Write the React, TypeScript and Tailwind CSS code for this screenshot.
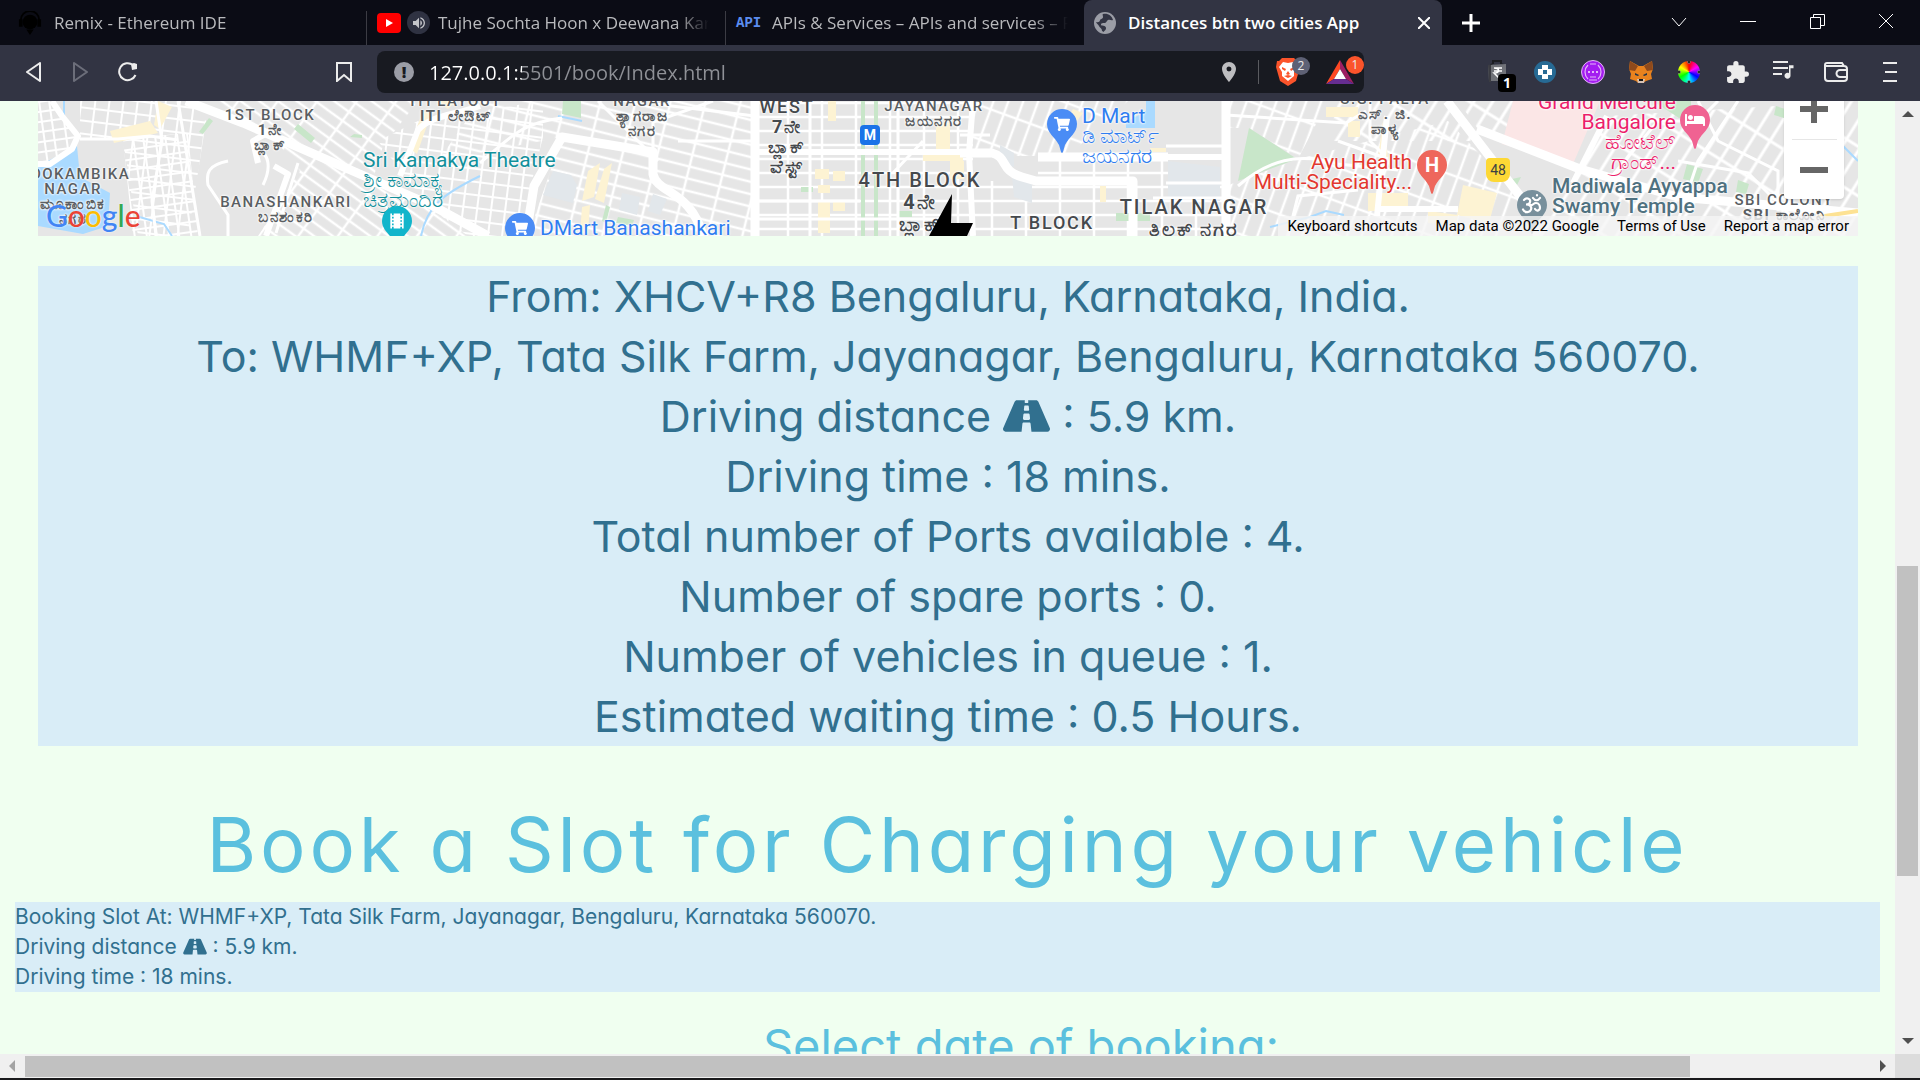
import React from "react";
import { FaRoad, FaShoppingCart, FaBed } from "react-icons/fa";
import { MdExtension, MdLocationOn, MdMusicNote, MdTheaters, MdVolumeUp } from "react-icons/md";

interface MapLabelProps {
  lines: string[];
  x: number;
  y: number;
  className: string;
}

interface TabProps {
  title: string;
  icon: React.ReactNode;
  active?: boolean;
}

const area = "text-[15px] leading-[15px] font-medium tracking-widest text-[#5a5e62] text-center -translate-x-1/2";
const district = "text-[18px] leading-[20px] font-medium tracking-widest text-[#45494d] text-center -translate-x-1/2";
const ward = "text-[20px] leading-[22px] font-medium tracking-widest text-[#45494d] text-center -translate-x-1/2";
const place = "text-[21px] leading-[20px]";

const labels: MapLabelProps[] = [
  { lines: ["1ST BLOCK", "1ನೇ", "ಬ್ಲಾಕ್"], x: 232, y: 7, className: area },
  { lines: ["MOOKAMBIKA", "NAGAR", "ಮೂಕಾಂಬಿಕ", "ನಗರ"], x: 35, y: 66, className: area },
  { lines: ["BANASHANKARI", "ಬನಶಂಕರಿ"], x: 248, y: 94, className: area },
  { lines: ["ITI LAYOUT", "ITI ಲೇಔಟ್"], x: 418, y: -7, className: area },
  { lines: ["NAGAR", "ತ್ಯಾಗರಾಜ", "ನಗರ"], x: 604, y: -7, className: area },
  { lines: ["JAYANAGAR", "ಜಯನಗರ"], x: 896, y: -2, className: area },
  { lines: ["S.G. PALYA", "ಎಸ್. ಜಿ.", "ಪಾಳ್ಯ"], x: 1347, y: -9, className: area },
  { lines: ["SBI COLONY", "SBI ಕಾಲೋನಿ"], x: 1746, y: 92, className: area },
  { lines: ["WEST", "7ನೇ", "ಬ್ಲಾಕ್", "ವೆಸ್ಟ್"], x: 749, y: -4, className: district },
  { lines: ["4TH BLOCK", "4ನೇ", "ಬ್ಲಾಕ್"], x: 882, y: 68, className: ward },
  { lines: ["T BLOCK"], x: 1014, y: 112, className: district },
  { lines: ["TILAK NAGAR", "ತಿಲಕ್ ನಗರ"], x: 1156, y: 95, className: ward },
  { lines: ["Sri Kamakya Theatre", "ಶ್ರೀ ಕಾಮಾಕ್ಯ", "ಚಿತ್ರಮಂದಿರ"], x: 325, y: 49, className: `${place} text-[#12909b]` },
  { lines: ["DMart Banashankari"], x: 502, y: 117, className: `${place} text-[#2f7df0]` },
  { lines: ["D Mart", "ಡಿ ಮಾರ್ಟ್", "ಜಯನಗರ"], x: 1044, y: 5, className: `${place} text-[#2f7df0]` },
  { lines: ["Ayu Health", "Multi-Speciality..."], x: 1374, y: 51, className: `${place} text-right -translate-x-full text-[#e2382f]` },
  { lines: ["Grand Mercure", "Bangalore", "ಹೋಟೆಲ್", "ಗ್ರಾಂಡ್..."], x: 1638, y: -9, className: `${place} text-right -translate-x-full text-[#ec1f6c]` },
  { lines: ["Madiwala Ayyappa", "Swamy Temple"], x: 1514, y: 75, className: `${place} font-medium text-[#4f7180]` },
];

const isKannada = (line: string) => /[\u0c80-\u0cff]/.test(line);

const MapLabel: React.FC<MapLabelProps> = ({ lines, x, y, className }) => (
  <p
    className={`absolute whitespace-nowrap [text-shadow:0_0_2px_#fff,0_0_2px_#fff,0_0_3px_#fff] ${className}`}
    style={{ left: x, top: y }}
  >
    {lines.map((line) => (
      <span key={line} className={isKannada(line) && className.includes("tracking-widest") ? "block font-bold" : "block"}>
        {line}
      </span>
    ))}
  </p>
);

const Pin: React.FC<{ x: number; y: number; color: string; children: React.ReactNode }> = ({ x, y, color, children }) => (
  <div className="absolute h-[46px] w-[30px] -translate-x-1/2" style={{ left: x, top: y - 15 }}>
    <svg viewBox="0 0 30 46" className="absolute inset-0" fill={color}>
      <path d="M15 0a15 15 0 0 1 15 15c0 9-8 13-12 21-1 3-2 8-3 8s-2-5-3-8C8 28 0 24 0 15A15 15 0 0 1 15 0z" />
    </svg>
    <span className="relative flex h-[30px] items-center justify-center text-xl text-white">{children}</span>
  </div>
);

const StreetMap = () => (
  <svg viewBox="0 0 1820 135" preserveAspectRatio="xMinYMin slice" className="absolute inset-0 h-full w-full" fill="none" stroke="#fff">
    <defs>
      <pattern id="gridA" width="22" height="10" patternUnits="userSpaceOnUse" patternTransform="rotate(-8)">
        <path d="M0 1H22M1 0V10M11 0V10" strokeWidth="2" />
      </pattern>
      <pattern id="gridB" width="14" height="26" patternUnits="userSpaceOnUse" patternTransform="rotate(7)">
        <path d="M0 1H14M1 0V26M0 14H14" strokeWidth="2" />
      </pattern>
      <pattern id="gridC" width="32" height="11" patternUnits="userSpaceOnUse" patternTransform="rotate(36)">
        <path d="M0 2H32M2 0V11" strokeWidth="2.500" />
      </pattern>
      <pattern id="gridD" width="34" height="12" patternUnits="userSpaceOnUse" patternTransform="rotate(14)">
        <path d="M0 2H34M2 0V12" strokeWidth="2.500" />
      </pattern>
      <pattern id="gridE" width="34" height="14" patternUnits="userSpaceOnUse">
        <path d="M0 2H34M2 0V14" strokeWidth="2.500" />
      </pattern>
      <pattern id="gridF" width="14" height="32" patternUnits="userSpaceOnUse" patternTransform="rotate(20)">
        <path d="M0 2H14M2 0V32" strokeWidth="2.500" />
      </pattern>
      <pattern id="gridG" width="42" height="16" patternUnits="userSpaceOnUse" patternTransform="rotate(-58)">
        <path d="M0 2H42M2 0V16" strokeWidth="3" />
      </pattern>
    </defs>
    <path fill="#e6e6e6" stroke="none" d="M0 0H1820V135H0z" />
    <g stroke="none">
      <path fill="url(#gridA)" d="M0 0H14L40 35L34 50L0 64zM85 38L150 32L160 135H95z" />
      <path fill="url(#gridB)" d="M42 0H150L168 20L150 135H100L85 38H42zM390 105L340 40L380 20L505 0V36L480 135H430z" />
      <path fill="url(#gridC)" d="M170 0H380L345 45L335 78L215 25zM395 105L240 42L262 70L220 135H430z" />
      <path fill="url(#gridD)" d="M442 0H717V135H490L524 36L400 60z" />
      <path fill="url(#gridE)" d="M717 0H935V135H717zM935 80H1188V135H935zM1000 55H1130V80H1000z" />
      <path fill="url(#gridF)" d="M935 0H1090L1030 55H935zM1188 0H1290L1260 58L1211 27H1188zM1260 58L1410 20L1482 95L1460 135H1188V85z" />
      <path fill="url(#gridG)" d="M1300 0H1409L1439 40H1290zM1569 15L1820 0V135H1500L1542 68zM1420 0H1475V43L1440 28z" />
    </g>
    <g stroke="none" fill="#fdf3d3">
      <path d="M72 30l40-10 8 12-44 10zM120 0l14 6-12 22-6-4zM385 10l8 3-14 40-8-6zM398 0h20l-8 8zM550 70l12-8-6 34-12 4zM566 68l8-6-8 40-9-4zM544 106l8-2-2 28h-8zM777 68h14v10h-14zM795 70h12v10h-12zM780 84h12v8h-12zM780 100h12v32h-12zM795 100h12v10h-12zM898 22h14v26h-14zM885 54h40v6h-40zM912 60h14v18h-14zM790 0h8v20h-8zM1035 8l10 4-14 18h-8zM1112 47h16v4h-16zM1062 85h6v16h-6zM1288 6h32v10h-32zM1310 20h12v16h-12zM1345 20l5 36h-10zM1330 92h40v18h-40zM1425 84l34 8-8 30-32-8zM1390 110l30 4-2 10-28-2z" />
    </g>
    <g stroke="none" fill="#c8e6c9">
      <path d="M171 17l4 3-10 13-4-2zM260 23l17 14-4 5-17-14zM316 33l8 1v3l-12-1zM525 0h18v17l-19-4zM568 104l4 2-4 16-4-2zM580 116l16 3-2 6-16-3zM763 86h12v5h-12zM823 0h4v135h-4zM836 0h4v135h-4zM860 110h14v6h-14zM1211 27l48 31-59 22zM1078 112h34v8h-34zM1615 0h38v15l-12 2zM1649 63l16 5-5 14-15-4zM1700 79l11 4-3 10-10-2zM1738 5l12 4-4 8-10-3zM1474 78l9-2-6 12z" />
    </g>
    <g stroke="none" fill="#e2e7eb">
      <path d="M515 70l18 4 6 10-4 18-30-8zM584 92l18 4-3 18-18-5zM615 93l14 5-7 16-12-4zM1130 60l52 6v34l-52-4zM962 44l14 8v14l-14-4zM974 74l20 8v20l-18-6z" />
      <path fill="#fbe6e6" d="M1475 0H1562L1535 63L1464 43z" />
      <path fill="#aadaff" d="M0 65L39 45L42 76L72 92L70 125L45 133L0 125zM1117 0V27H1088V21L1108 10V0z" />
    </g>
    <g stroke="#aadaff" strokeWidth="2">
      <path d="M26 0v18M98 115l28 8 8 12M383 135c6-30 22-42 59-60M520 15l24 5M1232 126l40-10 16-6 18 4M1790 30l30 30" />
    </g>
    <g strokeWidth="3">
      <path d="M42 38h38l32-3 28 4M118 0l6 40-10 60 4 35M140 0l22 135M260 62l-22 70M190 60c-20 4-22 12-20 24l20 30v21M215 48c18 2 18 20 10 36M442 62c30-25 40-40 82-45M615 51v-30l60-21M560 0l60 60M717 40H640M717 15l-100-12M717 100h105M717 118h190M860 0v135M772 0v135M885 40l-30 32M922 34h30M1188 45h-60M1188 82h-60M1115 97h73M1188 14l120 8 20-12M1200 85c30-26 60-34 100-22l60 6M1332 0v40l12 12-6 30M1300 40l50 18M1250 135l10-40 60-6M1560 20h100l20-20M1640 60l70 12 60 60M1570 80l50-60M1660 0l20 40 60 30v40M1700 0l-40 60-24 72" />
    </g>
    <g strokeWidth="6" strokeLinejoin="round">
      <path d="M14 0L24 15L40 35L34 48L12 63H0M220 62l-5-22 18-10M228 135l22-62-14-8M442 5c-30 10-50 10-62 24l-18 46M717 51h218M935 0l-4 52 4 83M1130 56h58M1349 15l-10 100M1340 108h80M1569 15l-34 67" />
    </g>
    <g strokeWidth="9" strokeLinejoin="round">
      <path d="M148 0L205 22L395 105L450 135M488 135l8-50 28-49L615 51v22c4 20 38 16 50 62M717 0v135M922 52h32c16 4 8 18 30 24l14 4h97v55M1188 0v135M1000 56h130M1409 0L1482 95L1500 135M1439 28L1542 68L1640 96L1820 112" />
    </g>
    <path d="M1780 116l40-6" stroke="#fde293" strokeWidth="4" />
  </svg>
);

const GoogleLogo = () => (
  <a href="#google" aria-label="Google" className="absolute bottom-[6px] left-2 text-[30px] leading-[30px] font-medium font-['Lato',sans-serif] [text-shadow:0_0_2px_#fff]">
    <span className="text-[#4285f4]">G</span>
    <span className="text-[#ea4335]">o</span>
    <span className="text-[#fbbc04]">o</span>
    <span className="text-[#4285f4]">g</span>
    <span className="text-[#34a853]">l</span>
    <span className="text-[#ea4335]">e</span>
  </a>
);

const MapPanel = () => (
  <section aria-label="Map" className="relative h-[135px] overflow-hidden font-['Roboto','Noto_Sans',sans-serif]">
    <StreetMap />
    {labels.map((label) => (
      <MapLabel key={label.lines.join(" ") + label.x} {...label} />
    ))}
    <svg viewBox="0 0 44 42" className="absolute top-[93px] left-[891px] h-[42px] w-11">
      <path d="M23 0L0 42H38L44 29H22z" />
    </svg>
    <Pin x={359} y={120} color="#12b5cb">
      <MdTheaters />
    </Pin>
    <Pin x={482} y={127} color="#4a8cf5">
      <FaShoppingCart className="h-4 w-4" />
    </Pin>
    <Pin x={1024} y={23} color="#4a8cf5">
      <FaShoppingCart className="h-4 w-4" />
    </Pin>
    <Pin x={1394} y={64} color="#ee675c">
      <b>H</b>
    </Pin>
    <Pin x={1657} y={19} color="#f06292">
      <FaBed className="h-5 w-5" />
    </Pin>
    <Pin x={1494} y={104} color="#78909c">
      <svg viewBox="0 0 24 24" className="h-6 w-6" fill="none" stroke="currentColor" strokeWidth="2.200" strokeLinecap="round">
        <path d="M4 7c3-3 7-1 6 2 0 2-2 2.500-4 2.500 4 0 6 2 5 5s-6 4-8 0M10 12c3 1 3-2 6-2s4 3 4 5-3 4-5 1M13 5c2 3 5 3 7 0M17 2v.5" />
      </svg>
    </Pin>
    <span className="absolute top-6 left-[822px] flex h-5 w-5 items-center justify-center rounded bg-[#1a73e8] text-sm font-bold text-white">M</span>
    <span className="absolute top-[57px] left-[1448px] flex h-6 w-6 items-center justify-center rounded-t-sm rounded-b-lg bg-[#fdd835] text-sm text-[#3c4043]">48</span>
    <GoogleLogo />
    <div className="absolute -top-10 right-[14px] flex h-[138px] w-[60px] flex-col items-center rounded-b bg-white shadow">
      <button type="button" aria-label="Zoom in" className="flex h-[78px] w-full items-end justify-center pb-4">
        <svg viewBox="0 0 28 28" className="h-7 w-7" stroke="#666" strokeWidth="6">
          <path d="M14 0V28M0 14H28" />
        </svg>
      </button>
      <span className="h-px w-[45px] bg-[#e6e6e6]" />
      <button type="button" aria-label="Zoom out" className="flex w-full flex-1 items-center justify-center">
        <svg viewBox="0 0 28 28" className="h-7 w-7" stroke="#666" strokeWidth="6">
          <path d="M0 14H28" />
        </svg>
      </button>
    </div>
    <div className="absolute right-0 bottom-0 flex h-5 items-center gap-[18px] bg-[#f5f5f5]/80 px-[9px] text-[15px] text-black">
      <button type="button">Keyboard shortcuts</button>
      <span>Map data ©2022 Google</span>
      <a href="#terms">Terms of Use</a>
      <a href="#report">Report a map error</a>
    </div>
  </section>
);

const Tab: React.FC<TabProps> = ({ title, icon, active = false }) => (
  <div
    role="tab"
    aria-selected={active}
    className={`flex min-w-0 flex-1 items-center gap-3 pr-4 pl-[10px] ${active ? "rounded-t-lg bg-[#323443]" : ""}`}
  >
    <span className="flex shrink-0 items-center gap-1">{icon}</span>
    <span
      className={`flex-1 overflow-hidden text-[17px] whitespace-nowrap ${
        active ? "font-semibold text-white" : "text-[#b9babd] [mask-image:linear-gradient(to_right,black_88%,transparent)]"
      }`}
    >
      {title}
    </span>
    {active && (
      <button type="button" aria-label="Close tab" className="-mr-2 p-1">
        <svg viewBox="0 0 12 12" className="h-3 w-3" stroke="#fff" strokeWidth="2">
          <path d="M0 0L12 12M12 0L0 12" />
        </svg>
      </button>
    )}
  </div>
);

const TabBar = () => (
  <div className="flex h-[45px] bg-[#0b0c15]">
    <div role="tablist" className="flex w-[1442px] min-w-0 pl-2">
      <Tab
        title="Remix - Ethereum IDE"
        icon={
          <svg viewBox="0 0 24 26" className="h-6 w-6" fill="#000">
            <circle cx="12" cy="12" r="8" />
            <path d="M2 10a10 10 0 0 1 20 0" fill="none" stroke="#000" strokeWidth="2" />
            <path d="M0 9h4v8H0zM20 9h4v8h-4zM8 20h8l-4 6z" />
          </svg>
        }
      />
      <span className="mt-[11px] w-px bg-[#3c3c44]" />
      <Tab
        title="Tujhe Sochta Hoon x Deewana Kar"
        icon={
          <>
            <svg viewBox="0 0 24 20" className="h-5 w-6">
              <rect width="24" height="20" rx="4" fill="#f00" />
              <path d="M9 6l7 4-7 4z" fill="#fff" />
            </svg>
            <span className="-mr-1 ml-0.5 flex h-[23px] w-[23px] items-center justify-center rounded-full bg-[#2f3242] text-base text-[#c4c5ca]">
              <MdVolumeUp />
            </span>
          </>
        }
      />
      <span className="mt-[11px] w-px bg-[#3c3c44]" />
      <Tab
        title="APIs & Services – APIs and services – F"
        icon={<span className="w-6 text-sm font-bold text-[#5b8def] font-['Liberation_Mono',monospace]">API</span>}
      />
      <Tab
        active
        title="Distances btn two cities App"
        icon={
          <svg viewBox="0 0 22 22" className="h-[22px] w-[22px]">
            <circle cx="11" cy="11" r="11" fill="#9b9da6" />
            <path d="M9 2c5-1 9 2 10 6-2 1-3-1-5 0s-1 3-4 3-3 1-3 2 5 0 5 3-2 2-2 4l-2-1c0-3-2-3-3-5S2 11 2 10c3 1 4-1 4-2s3-1 3-3-1-2 0-3z" fill="#323443" />
          </svg>
        }
      />
    </div>
    <div className="flex flex-1 items-center justify-between">
      <button type="button" aria-label="New tab" className="flex w-[58px] justify-center">
        <svg viewBox="0 0 18 18" className="h-[18px] w-[18px]" stroke="#fff" strokeWidth="3">
          <path d="M9 0V18M0 9H18" />
        </svg>
      </button>
      <div className="flex pb-1">
        {[
          ["Search tabs", "M1 5L8 13L15 5"],
          ["Minimize", "M0 8.500H16"],
          ["Restore", "M1.500 4.500H11.500V15.500H1.500zM4.500 4.500V1.500H15.500V12.500H11.500"],
          ["Close", "M1 1L15 15M15 1L1 15"],
        ].map(([name, path]) => (
          <button key={name} type="button" aria-label={name} className="flex w-[69px] justify-center">
            <svg viewBox="0 0 16 16" className="h-4 w-4" fill="none" stroke="#fff" strokeWidth="1">
              <path d={path} />
            </svg>
          </button>
        ))}
      </div>
    </div>
  </div>
);

const BraveIcon = () => (
  <svg viewBox="0 0 24 28" className="h-7 w-6">
    <path d="M6 0h12l3 3 2 0 1 6-4 14-8 5-8-5L0 9l1-6h2z" fill="#fb542b" />
    <path d="M7 4l5 1 5-1 4 5-3 5 0 4-6 5-6-5 0-4-3-5z" fill="#fff" />
    <path d="M6 9l4 2-1 2-3-2zM18 9l-4 2 1 2 3-2zM12 13l2 3-2 1-2-1zM8 18l4 2 4-2-4-1z" fill="#fb542b" />
  </svg>
);

const RewardsIcon = () => (
  <svg viewBox="0 0 28 24" className="h-6 w-7">
    <path d="M14 0L0 24l8-5 6-10z" fill="#ff4724" />
    <path d="M14 0l14 24-8-5-6-10z" fill="#9e1f63" />
    <path d="M0 24h28l-8-5H8z" fill="#662d91" />
    <path d="M14 9l6 10H8z" fill="#fff" />
  </svg>
);

const FoxIcon = () => (
  <svg viewBox="0 0 24 22" className="h-[22px] w-6">
    <path d="M1 0l9 5h4l9-5 1 8-2 5 1 5-6 2-3 2H9l-2-2-6-2 1-5-2-5z" fill="#e8821e" />
    <path d="M1 0l8 5-3 5-6-1zM23 0l-8 5 3 5 6-1z" fill="#8f4a1c" />
    <path d="M6 12l4 2-1 1-3-1zM18 12l-4 2 1 1 3-1z" fill="#233447" />
    <path d="M8 18h8l-1 4H9z" fill="#d7c1b3" />
    <path d="M10 18h4v2h-4z" fill="#161616" />
  </svg>
);

const extensions: { name: string; icon: React.ReactNode; wide?: boolean }[] = [
  {
    name: "Price tracker",
    icon: (
      <span className="relative">
        <svg viewBox="0 0 22 24" className="h-6 w-[22px]">
          <path d="M7 4V1h8v3M6 4L3 7M16 4l3 3" fill="none" stroke="#1c1d22" strokeWidth="2" />
          <path d="M2 5l18-1v17H3z" fill="#707278" />
          <path d="M2 5l3 0v17H3z" fill="#3b3c42" />
          <path d="M8 8h8M8 11h8M8 8c6 0 6 5 0 5l6 6" fill="none" stroke="#fff" strokeWidth="1.500" />
        </svg>
        <span className="absolute top-[14px] left-3 flex h-[18px] w-[18px] items-center justify-center rounded bg-black text-sm font-bold text-white">1</span>
      </span>
    ),
  },
  {
    name: "Sourcing",
    icon: (
      <svg viewBox="0 0 22 22" className="h-[22px] w-[22px]">
        <circle cx="11" cy="11" r="11" fill="#276a94" />
        <path d="M8 4h6v4h4v6h-4v4H8v-4H4V8h4z" fill="#fff" />
        <path d="M9 9h4v4H9z" fill="#276a94" />
      </svg>
    ),
  },
  {
    name: "Mask",
    icon: (
      <svg viewBox="0 0 24 24" className="h-6 w-6" fill="none" stroke="#e3b5f7">
        <circle cx="12" cy="12" r="11.500" fill="#a31cf0" />
        <path d="M7 5c-4 4-4 10 0 14M17 5c4 4 4 10 0 14M9 4h6M9 17h6M8 20h8" strokeWidth="1.200" />
        <path d="M7 12h2M11 12h2M15 12h2" strokeWidth="2" />
      </svg>
    ),
  },
  { name: "Wallet extension", icon: <FoxIcon /> },
  {
    name: "Color picker",
    icon: (
      <span className="relative h-[22px] w-[22px] rounded-full bg-[conic-gradient(#f00,#f0f,#00f,#0ff,#0f0,#ff0,#f00)]">
        <svg viewBox="0 0 22 22" className="absolute inset-0" fill="#111" stroke="#999" strokeWidth=".6">
          <circle cx="11" cy="1" r="1.500" />
          <circle cx="11" cy="21" r="1.500" />
          <circle cx="1" cy="11" r="1.500" />
          <circle cx="21" cy="11" r="1.500" />
        </svg>
      </span>
    ),
  },
  { name: "Extensions", icon: <MdExtension className="h-[25px] w-[25px]" /> },
  {
    name: "Media",
    icon: (
      <span className="flex items-start">
        <svg viewBox="0 0 15 18" className="h-[18px] w-[15px]" stroke="currentColor" strokeWidth="2">
          <path d="M0 2H15M0 8H15M0 14H9" />
        </svg>
        <MdMusicNote className="-ml-2 h-[24px] w-[18px]" />
      </span>
    ),
  },
  {
    name: "Wallet",
    wide: true,
    icon: (
      <svg viewBox="0 0 24 20" className="h-5 w-6" fill="none" stroke="currentColor" strokeWidth="2">
        <path d="M1 3v13a3 3 0 0 0 3 3h16a3 3 0 0 0 3-3V7a3 3 0 0 0-3-3H3a2 2 0 0 1-2-1 2 2 0 0 1 2-2h15l2 3M23 8h-7a3.500 3.500 0 0 0 0 7h7" />
      </svg>
    ),
  },
  {
    name: "Menu",
    wide: true,
    icon: (
      <svg viewBox="0 0 14 20" className="h-5 w-[14px]" stroke="currentColor" strokeWidth="2">
        <path d="M0 1H14M2 10H14M0 19H14" />
      </svg>
    ),
  },
];

const Toolbar = () => (
  <div className="flex h-14 items-center bg-[#323443] pb-0.5 text-[#ececec]">
    <div className="flex w-[377px] shrink-0 items-center justify-between pr-6 pl-[25px]">
      <div className="flex items-center gap-7">
        <button type="button" aria-label="Back">
          <svg viewBox="0 0 18 20" className="h-5 w-[18px]" fill="none" stroke="currentColor" strokeWidth="2" strokeLinejoin="round">
            <path d="M15 1V19L2 10z" />
          </svg>
        </button>
        <button type="button" aria-label="Forward" disabled className="text-[#6c6e7a]">
          <svg viewBox="0 0 18 20" className="h-5 w-[18px]" fill="none" stroke="currentColor" strokeWidth="2" strokeLinejoin="round">
            <path d="M3 1V19L16 10z" />
          </svg>
        </button>
        <button type="button" aria-label="Reload">
          <svg viewBox="0 0 22 20" className="h-5 w-[22px]" fill="none" stroke="currentColor" strokeWidth="2">
            <path d="M16 3a8.500 8.500 0 1 0 2.500 10" />
            <path d="M14 2l3-1 3 1v5l-5 1z" fill="currentColor" stroke="none" />
          </svg>
        </button>
      </div>
      <button type="button" aria-label="Bookmark this tab">
        <svg viewBox="0 0 18 20" className="h-5 w-[18px]" fill="none" stroke="currentColor" strokeWidth="2">
          <path d="M2 1H16V19L9 13L2 19z" />
        </svg>
      </button>
    </div>
    <div className="flex h-[42px] min-w-0 flex-1 items-center rounded-lg bg-[#181a21] pr-1 pl-[17px]">
      <span className="flex h-5 w-5 items-center justify-center rounded-full bg-[#9b9da6] text-base font-extrabold text-[#181a21]">!</span>
      <input
        aria-label="Address"
        defaultValue="127.0.0.1:5501/book/Index.html"
        className="ml-[15px] h-8 min-w-0 flex-1 bg-[linear-gradient(to_right,#fff_93px,#8f9197_93px)] bg-clip-text text-[20px] text-transparent outline-none"
      />
      <MdLocationOn className="h-6 w-6 text-[#bdbdc0]" />
      <span className="mx-[17px] h-6 w-px bg-[#5a5b60]" />
      <button type="button" aria-label="Brave Shields" className="relative w-[50px]">
        <BraveIcon />
        <span className="absolute -top-px left-4 flex h-[18px] w-[18px] items-center justify-center rounded-full bg-[#5e6175] text-xs">2</span>
      </button>
      <button type="button" aria-label="Brave Rewards" className="relative w-[34px]">
        <RewardsIcon />
        <span className="absolute -top-1 left-5 flex h-[18px] w-[18px] items-center justify-center rounded-full bg-[#fb542b] text-xs">1</span>
      </button>
    </div>
    <div className="flex shrink-0 items-center pr-[3px] pl-[109px]">
      {extensions.map(({ name, icon, wide }) => (
        <button key={name} type="button" aria-label={name} className={`flex items-center justify-center ${wide ? "w-[54px]" : "w-12"}`}>
          {icon}
        </button>
      ))}
    </div>
  </div>
);

const Arrow: React.FC<{ path: string; color?: string }> = ({ path, color = "#505050" }) => (
  <svg viewBox="0 0 12 12" className="h-3 w-3" fill={color}>
    <path d={path} />
  </svg>
);

const VerticalScrollbar = () => (
  <div className="flex w-[25px] shrink-0 flex-col items-center bg-[#f0f0f0] py-[7px]">
    <Arrow path="M0 9L6 3L12 9z" />
    <span className="grow-[446]" />
    <span className="w-[21px] grow-[311] bg-[#c1c1c1]" />
    <span className="grow-[159]" />
    <Arrow path="M0 3L6 9L12 3z" />
  </div>
);

const HorizontalScrollbar = () => (
  <div className="flex h-6 shrink-0 bg-[#f0f0f0]">
    <div className="flex flex-1 items-center px-[6px]">
      <Arrow path="M9 0L3 6L9 12z" color="#a3a3a3" />
      <span className="ml-[7px] h-[21px] grow-[1665] bg-[#c1c1c1]" />
      <span className="grow-[187]" />
      <Arrow path="M3 0L9 6L3 12z" />
    </div>
    <span className="w-[25px] bg-[#dcdcdc]" />
  </div>
);

const Road: React.FC<{ className: string }> = ({ className }) => <FaRoad className={`inline ${className}`} />;

const BookingPage = () => (
  <main className="min-w-0 flex-1 overflow-hidden bg-[#f0fff0] font-['Inter','Open_Sans',sans-serif] text-[#31708f] [font-feature-settings:'cv11']">
    <div className="pr-[37px] pl-[38px]">
      <MapPanel />
      <div className="mt-[30px] bg-[#d9edf7] text-center text-[43px] leading-[60px]">
        <p>From: XHCV+R8 Bengaluru, Karnataka, India.</p>
        <p>To: WHMF+XP, Tata Silk Farm, Jayanagar, Bengaluru, Karnataka 560070.</p>
        <p>
          Driving distance <Road className="h-[42px] w-[47px] align-[-5px]" /> : 5.9 km.
        </p>
        <p>Driving time : 18 mins.</p>
        <p>Total number of Ports available : 4.</p>
        <p>Number of spare ports : 0.</p>
        <p>Number of vehicles in queue : 1.</p>
        <p>Estimated waiting time : 0.5 Hours.</p>
      </div>
    </div>
    <h1 className="mt-[45px] mb-[5px] text-center text-[76px] leading-[106px] tracking-wider whitespace-nowrap text-[#5bc0de]">
      Book a Slot for Charging your vehicle
    </h1>
    <div className="mx-[15px] bg-[#d9edf7] text-[21px] leading-[30px]">
      <p>Booking Slot At: WHMF+XP, Tata Silk Farm, Jayanagar, Bengaluru, Karnataka 560070.</p>
      <p>
        Driving distance <Road className="h-[21px] w-6 align-[-3px]" /> : 5.9 km.
      </p>
      <p>Driving time : 18 mins.</p>
    </div>
    <h2 className="mt-[24px] pl-[147px] text-center text-[47px] leading-[60px] text-[#5bc0de]">Select date of booking:</h2>
  </main>
);

const App = () => (
  <div className="flex h-screen flex-col overflow-hidden bg-[#1a1a1c] pb-[2px] font-['Open_Sans','Noto_Sans',sans-serif]">
    <header>
      <TabBar />
      <Toolbar />
    </header>
    <div className="flex min-h-0 flex-1">
      <BookingPage />
      <VerticalScrollbar />
    </div>
    <HorizontalScrollbar />
  </div>
);

export default App;
